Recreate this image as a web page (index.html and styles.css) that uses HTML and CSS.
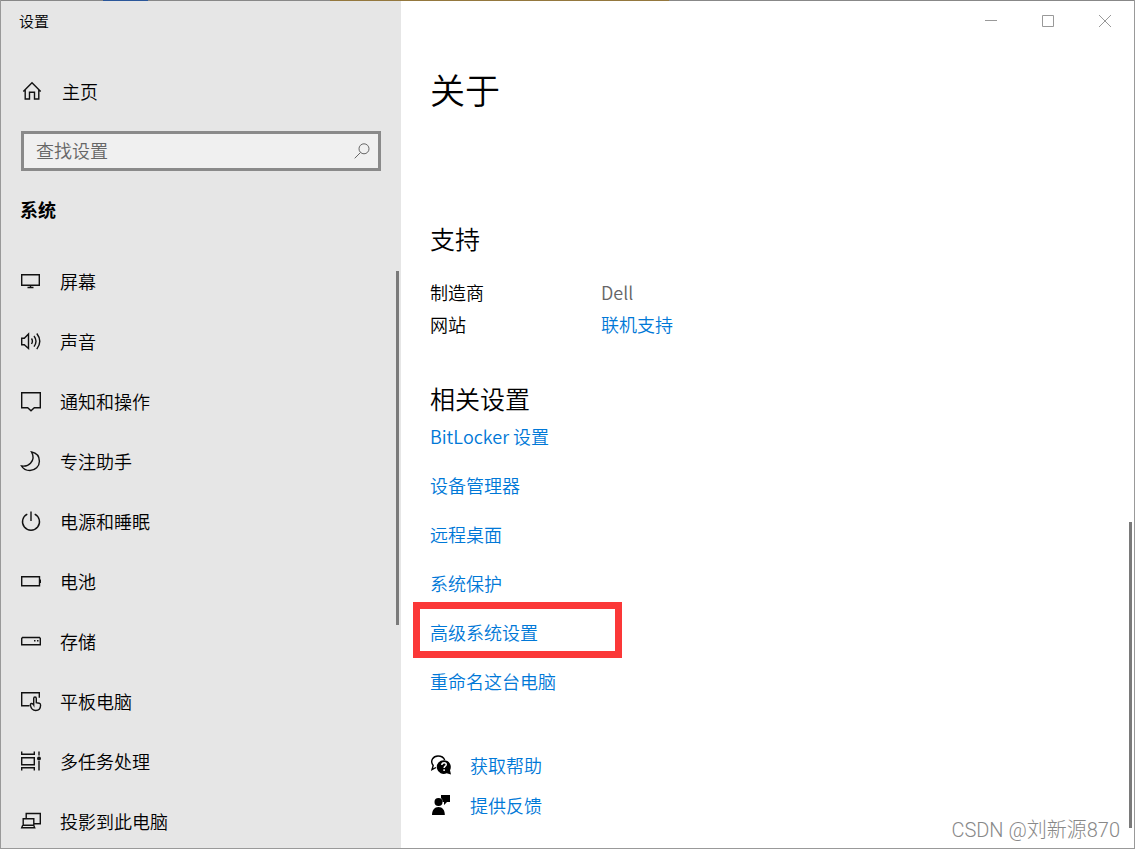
FILE: index.html
```
<!DOCTYPE html>
<html lang="zh-CN">
<head>
<meta charset="utf-8">
<meta name="viewport" content="width=device-width, initial-scale=1">
<title>设置</title>
<link rel="stylesheet" href="styles.css">
</head>
<body>
<div class="window">
  <aside class="sidebar">
    <div class="app-title">设置</div>
    <a class="home" href="#">
      <svg class="icon" viewBox="0 0 22 22"><path d="M2.300 11.500 11 2.800l8.700 8.700M4.200 9.800v9.200h4.300v-6.800h5V19h4.300V9.800"/></svg>
      <span>主页</span>
    </a>
    <label class="search">
      <input class="search-input" type="text" placeholder="查找设置" aria-label="查找设置">
      <svg class="search-icon" viewBox="0 0 16 16"><circle cx="10" cy="5.800" r="5"/><path d="M6.500 9.500.7 15.300"/></svg>
    </label>
    <h2 class="group-title">系统</h2>
    <nav class="nav">
      <a class="nav-item" href="#"><svg class="icon" viewBox="0 0 22 22"><path d="M1.700 4.700h17.600v10.600H1.700zM10.500 15.500v2M7.500 17.500h6"/></svg><span>屏幕</span></a>
      <a class="nav-item" href="#"><svg class="icon" viewBox="0 0 22 22"><path d="M1.700 8.300h2.600L8.500 4v14.500l-4.200-3.800H1.700zM11.500 8.500q1.800 2.600 0 5.500M14 6q4 5.300 0 10.600M16.800 3.500q6 7.700 0 15.600"/></svg><span>声音</span></a>
      <a class="nav-item" href="#"><svg class="icon" viewBox="0 0 22 22"><path d="M1.700 2.700h18.600v15h-6L11 20.800l-3.300-3.100h-6z"/></svg><span>通知和操作</span></a>
      <a class="nav-item" href="#"><svg class="icon" viewBox="0 0 22 22"><path d="M11.500 2c5 1 7.900 4.700 7.900 9.200 0 5.200-4.200 9.300-9.400 9.300-4 0-7-1.800-8.500-4.500 3.500.5 6.900-.3 9-2.700 3-3.200 3.200-7.500 1-11.300z"/></svg><span>专注助手</span></a>
      <a class="nav-item" href="#"><svg class="icon" viewBox="0 0 22 22"><path d="M7.300 4.100a8.500 8.500 0 1 0 7.400 0M11 1.500v9.500"/></svg><span>电源和睡眠</span></a>
      <a class="nav-item" href="#"><svg class="icon" viewBox="0 0 22 22"><path d="M1.700 6.700h17.800v9H1.700z"/><path class="solid" d="M19.500 9.500H21v3.500h-1.500z"/></svg><span>电池</span></a>
      <a class="nav-item" href="#"><svg class="icon" viewBox="0 0 22 22"><path d="M2.500 7.500h17l.8 1v6.200H1.700V8.500z"/><path class="solid" d="M14 10h1.500v1.500H14zM17 10h1.500v1.500H17z"/></svg><span>存储</span></a>
      <a class="nav-item" href="#"><svg class="icon" viewBox="0 0 22 22"><path d="M9.500 15.700H1.700v-13h17.600v5M13.700 15V8.500c0-2 2.600-2 2.600 0v4.200l3 .5c1 .3 1.300 1 1.300 2-.1 3-1.600 5.300-4.800 5.300-3 0-4.800-1.500-5.400-5.500-.2-1.700 2-2.300 3.300 0z"/></svg><span>平板电脑</span></a>
      <a class="nav-item" href="#"><svg class="icon" viewBox="0 0 22 22"><path d="M1.700 1.500v2.700h12.600V1.500M1.700 7.700h12.600v7H1.700zM1.700 20.500v-2.700h12.600v2.700M19 1.500v4M19 11v9.500"/><circle class="solid" cx="19" cy="8.500" r="2"/></svg><span>多任务处理</span></a>
      <a class="nav-item" href="#"><svg class="icon" viewBox="0 0 22 22"><path d="M6.200 8V3.500h14.100v10.200h-6M3.200 8.700h10.600v6.500H3.200zM2.700 15.200l-1 2.500h13l-1-2.500"/></svg><span>投影到此电脑</span></a>
    </nav>
    <div class="scrollbar sidebar-scroll"></div>
  </aside>
  <main class="main">
    <div class="caption">
      <button class="caption-button" type="button" aria-label="最小化"><svg class="caption-icon" viewBox="0 0 14 14"><path d="M1 6.500h12"/></svg></button>
      <button class="caption-button" type="button" aria-label="最大化"><svg class="caption-icon" viewBox="0 0 14 14"><path d="M1.500 1.500h11v11h-11z"/></svg></button>
      <button class="caption-button" type="button" aria-label="关闭"><svg class="caption-icon" viewBox="0 0 14 14"><path d="m1 1 12 12M13 1 1 13"/></svg></button>
    </div>
    <div class="content">
      <h1 class="page-title">关于</h1>
      <section class="support">
        <h2 class="section-title">支持</h2>
        <dl class="facts">
          <dt>制造商</dt><dd class="muted">Dell</dd>
          <dt>网站</dt><dd><a class="link" href="#">联机支持</a></dd>
        </dl>
      </section>
      <section class="related">
        <h2 class="section-title">相关设置</h2>
        <div class="links">
          <a class="link" href="#">BitLocker 设置</a>
          <a class="link" href="#">设备管理器</a>
          <a class="link" href="#">远程桌面</a>
          <a class="link" href="#">系统保护</a>
          <a class="link marked" href="#">高级系统设置</a>
          <a class="link" href="#">重命名这台电脑</a>
        </div>
      </section>
      <div class="help">
        <a class="help-item link" href="#"><svg class="help-icon" viewBox="0 0 22 22"><path class="outline" d="M6 13.500 2 15.700l1.200-4.200C-.5 6.500 3.500 2 8 2c3.500 0 5.800 1.700 6.700 4"/><path d="M14 6.200a6.800 6.800 0 0 1 6 10l1 4.300-4.300-1.200A6.900 6.900 0 1 1 14 6.200z"/><path class="question" d="M11.800 11c0-3.200 4.600-3 4.400-.3-.1 1.500-2.100 1.500-2.100 3.300M14.100 15.300v1.600"/></svg><span>获取帮助</span></a>
        <a class="help-item link" href="#"><svg class="help-icon" viewBox="0 0 22 22"><path d="M11 1h9v7h-3l-3 3V8h-1.500A4.300 4.300 0 0 0 11 4z"/><circle cx="8.500" cy="8" r="4"/><path d="M2 21c0-5 2.500-8 6.500-8s6.300 3 6.300 8z"/></svg><span>提供反馈</span></a>
      </div>
    </div>
    <div class="scrollbar main-scroll"></div>
    <div class="watermark">CSDN @刘新源870</div>
  </main>
</div>
</body>
</html>
```
FILE: styles.css
```
*,
*::before,
*::after {
  box-sizing: border-box;
}

body {
  margin: 0;
  font-family: "Noto Sans CJK SC", sans-serif;
  font-size: 18px;
  font-weight: 350;
  line-height: 24px;
  color: #000;
  background: #fff;
}

a {
  color: inherit;
  text-decoration: none;
}

h1,
h2,
dl,
dd {
  margin: 0;
  font-weight: inherit;
}

.window {
  position: relative;
  display: flex;
  height: 100vh;
  overflow: hidden;
  border: 1px solid #999;
  border-top: 0;
  padding-top: 1px;
}

/* Strip of the desktop seen above the window */
.window::before {
  content: "";
  position: absolute;
  inset: 0 0 auto;
  height: 1px;
  background: linear-gradient(90deg, #888 9%, #2b579a 9% 13%, #888 13% 29%, #94783e 29% 59%, #888 59%);
}

.sidebar {
  position: relative;
  display: flex;
  flex: none;
  flex-direction: column;
  width: 400px;
  padding: 0 20px 0 19px;
  background: #e6e6e6;
}

.app-title {
  margin-left: -1px;
  font-size: 15px;
  line-height: 40px;
}

.home {
  display: flex;
  align-items: center;
  gap: 19px;
  height: 40px;
  margin: 30px 0 0 1px;
}

.icon {
  flex: none;
  width: 22px;
  height: 22px;
  fill: none;
  stroke: #111;
  stroke-width: 1.4;
}

.icon .solid {
  fill: #111;
  stroke: none;
}

.search {
  display: flex;
  align-items: center;
  height: 40px;
  margin: 20px 0 0 1px;
  padding: 0 8px 0 12px;
  border: 3px solid #8a8a8a;
  background: #f0f0f0;
}

.search-input {
  flex: 1;
  min-width: 0;
  height: 32px;
  margin-bottom: 2px;
  padding: 0;
  border: 0;
  outline: 0;
  background: none;
  font: inherit;
}

.search-input::placeholder {
  color: #666;
  opacity: 1;
}

.search-icon {
  width: 16px;
  height: 16px;
  fill: none;
  stroke: #666;
}

.group-title {
  margin-top: 23px;
  font-size: 18px;
  font-weight: 700;
  line-height: 30px;
}

.nav {
  flex: 1;
  min-height: 0;
  margin-top: 27px;
  overflow: hidden;
}

.nav-item {
  display: flex;
  align-items: center;
  gap: 18px;
  height: 60px;
}

.scrollbar {
  position: absolute;
  width: 3px;
  background: #7a7a7a;
}

.sidebar-scroll {
  top: 270px;
  right: 2px;
  height: 354px;
}

.main {
  position: relative;
  flex: 1;
  min-width: 0;
  background: #fff;
}

.caption {
  display: flex;
  justify-content: flex-end;
  padding-right: 1px;
}

.caption-button {
  display: flex;
  align-items: center;
  justify-content: center;
  width: 57px;
  height: 40px;
  padding: 0;
  border: 0;
  background: none;
}

.caption-icon {
  width: 14px;
  height: 14px;
  fill: none;
  stroke: #999;
}

.content {
  padding: 23px 29px 0;
}

.page-title {
  font-size: 35px;
  line-height: 50px;
}

.support {
  margin-top: 107px;
}

.section-title {
  font-size: 25px;
  line-height: 34px;
}

.facts {
  display: grid;
  grid-template-columns: 171px 1fr;
  margin-top: 21px;
  line-height: 32px;
}

.muted {
  color: #666;
}

.link {
  color: #0078d7;
}

.related {
  margin-top: 41px;
}

.links {
  display: flex;
  flex-direction: column;
  align-items: flex-start;
  gap: 25px;
  margin-top: 9px;
}

.marked {
  position: relative;
}

/* Red frame drawn around the highlighted link */
.marked::after {
  content: "";
  position: absolute;
  top: -18px;
  left: -17px;
  width: 209px;
  height: 56px;
  border: 7px solid #fb3838;
}

.help {
  display: flex;
  flex-direction: column;
  align-items: flex-start;
  margin-top: 52px;
}

.help-item {
  display: flex;
  align-items: center;
  gap: 18px;
  height: 40px;
}

.help-icon {
  width: 22px;
  height: 22px;
  fill: #000;
}

.help-icon .outline {
  fill: none;
  stroke: #000;
  stroke-width: 1.4;
}

.help-icon .question {
  fill: none;
  stroke: #fff;
  stroke-width: 1.5;
}

.main-scroll {
  right: 2px;
  bottom: 20px;
  height: 306px;
}

.watermark {
  position: absolute;
  right: 14px;
  bottom: 6px;
  font-family: Roboto, "Noto Sans CJK SC", sans-serif;
  font-size: 20px;
  font-weight: 300;
  color: #888;
}
```
